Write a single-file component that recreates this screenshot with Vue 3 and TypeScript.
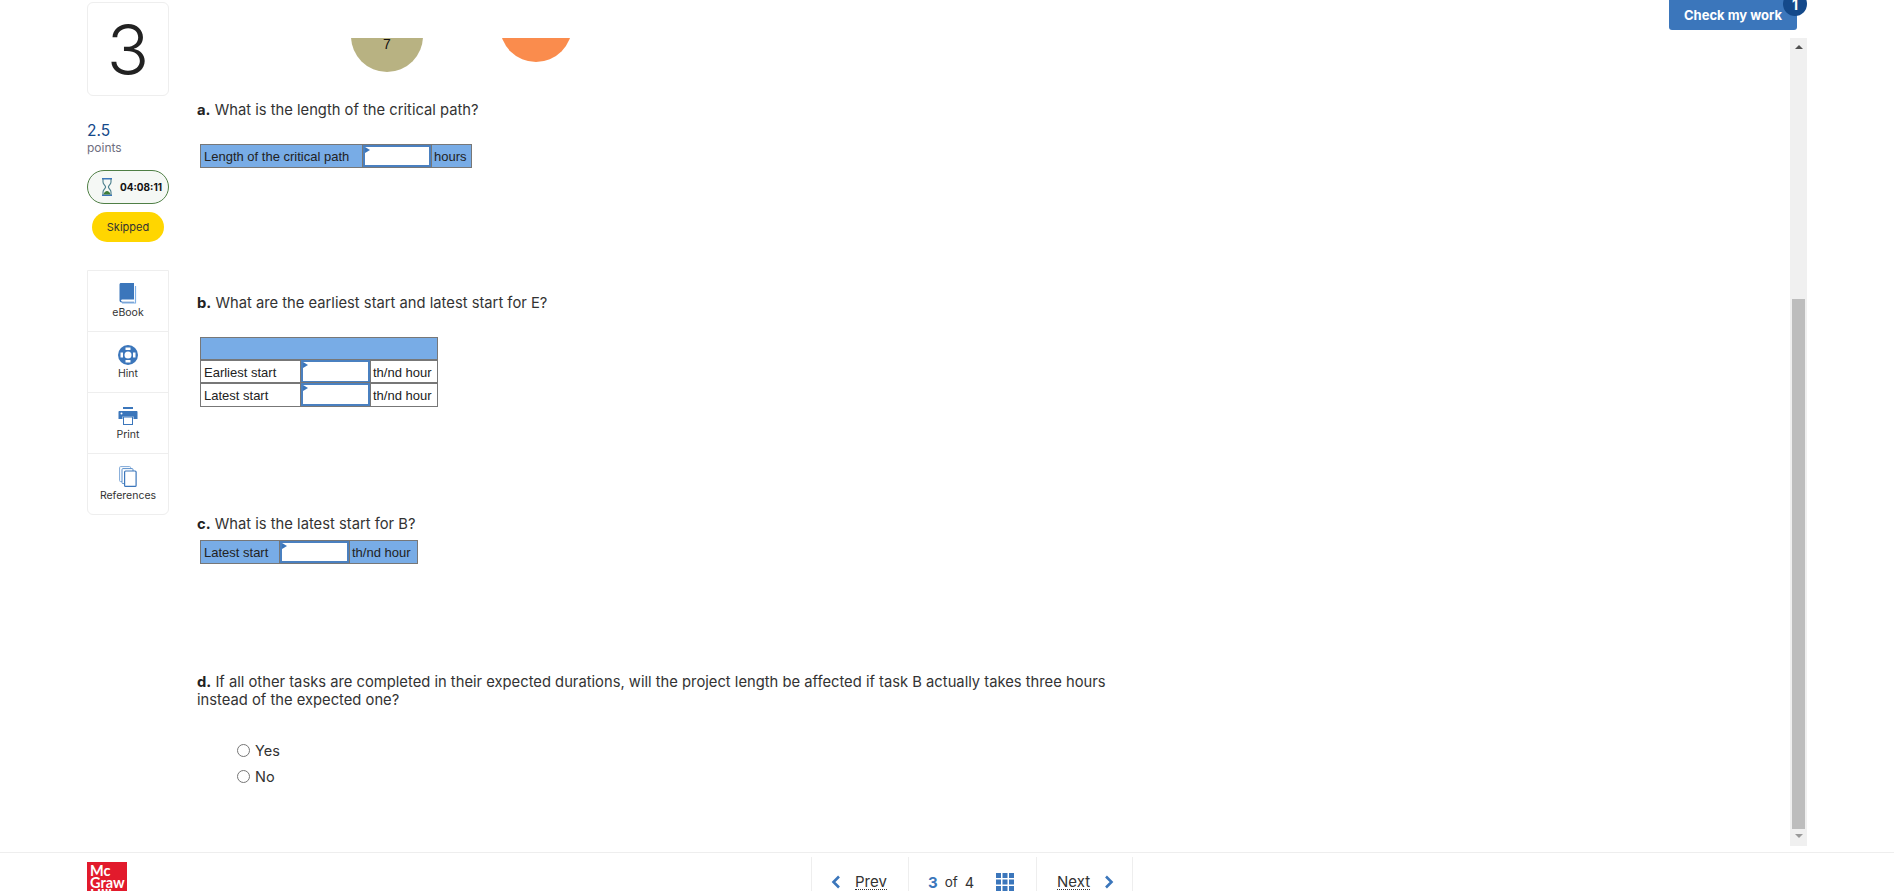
<script setup lang="ts">
const tools = ['eBook', 'Hint', 'Print', 'References'];
const startRows = ['Earliest start', 'Latest start'];
const choices = ['Yes', 'No'];
</script>

<template>
  <div class="page">
    <div class="workspace">
      <aside class="rail">
        <div class="number-card">3</div>
        <div class="points">
          <span class="points-value">2.5</span>
          <span class="points-label">points</span>
        </div>
        <div class="timer">
          <svg class="hourglass" viewBox="0 0 12 18" width="12" height="18">
            <path d="M1 .8h10M1 17.2h10" stroke="#3b76bb" stroke-width="1.4" fill="none" />
            <path d="M2 1v3c0 2.4 2.6 3.6 2.6 5S2 11.6 2 14v3M10 1v3c0 2.4-2.6 3.6-2.6 5s2.6 2.6 2.6 5v3" stroke="#4a7f8c" stroke-width="1.1" fill="none" />
            <path d="M2.6 16.6c.3-2.4 2-3.6 3.4-3.6s3.1 1.2 3.4 3.6z" fill="#3f7d3a" />
          </svg>
          <span>04:08:11</span>
        </div>
        <div class="status">Skipped</div>
        <nav class="tools">
          <div v-for="tool in tools" :key="tool" class="tool">
            <svg v-if="tool === 'eBook'" viewBox="0 0 18 21" width="18" height="21">
              <path d="M16.5 3v17H3" stroke="#7fb0e6" stroke-width="1.2" fill="none" />
              <path d="M2 0h13v16.5H3.500c-.8 0-1.500.4-1.500 1.100s.7 1.100 1.500 1.100H15v.8H2.800C1.500 19.500.5 18.800.5 17.500V1.500C.5.600 1.100 0 2 0z" fill="#3b76bb" />
            </svg>
            <svg v-else-if="tool === 'Hint'" viewBox="0 0 20 20" width="20" height="20">
              <circle cx="10" cy="10" r="10" fill="#3b76bb" />
              <circle cx="10" cy="10" r="3.500" fill="#fff" />
              <path d="M7.500 2.500h5v2.500h-5zM7.500 15h5v2.500h-5zM2.500 7.500H5v5H2.500zM15 7.500h2.500v5H15z" fill="#fff" />
            </svg>
            <svg v-else-if="tool === 'Print'" viewBox="0 0 20 20" width="20" height="20">
              <path d="M5 1h10v2H5z" fill="#3b76bb" />
              <path d="M1.500 5h17c.6 0 1 .4 1 1v7h-4v-2.500h-11V13h-4V6c0-.6.4-1 1-1z" fill="#3b76bb" />
              <circle cx="3.500" cy="7.500" r="1" fill="#fff" />
              <rect x="5.500" y="11" width="9" height="7.500" fill="#fff" stroke="#3b76bb" />
            </svg>
            <svg v-else viewBox="0 0 18 21" width="18" height="21">
              <rect x=".6" y=".6" width="11" height="15" rx="1" fill="#fff" stroke="#7fa8d8" />
              <rect x="3" y="2.600" width="11" height="15" rx="1" fill="#fff" stroke="#5a8fcb" />
              <rect x="5.600" y="5" width="11.500" height="15.400" rx="1" fill="#fff" stroke="#3b76bb" stroke-width="1.2" />
            </svg>
            <span>{{ tool }}</span>
          </div>
        </nav>
      </aside>

      <main class="question">
        <div class="action-bar">
          <button class="check-btn" type="button">
            Check my work
            <span class="badge">1</span>
          </button>
        </div>
        <div class="scroll-area">
          <div class="content">
            <div class="diagram">
              <div class="node node-olive">7</div>
              <div class="node node-orange">8</div>
            </div>

            <p class="prompt"><b>a.</b> What is the length of the critical path?</p>
            <div class="sheet sheet-a blue">
              <div class="cell">Length of the critical path</div>
              <div class="answer"></div>
              <div class="cell">hours</div>
            </div>

            <p class="prompt prompt-b"><b>b.</b> What are the earliest start and latest start for E?</p>
            <div class="sheet sheet-b">
              <div class="sheet-head"></div>
              <template v-for="row in startRows" :key="row">
                <div class="cell">{{ row }}</div>
                <div class="answer"></div>
                <div class="cell">th/nd hour</div>
              </template>
            </div>

            <p class="prompt prompt-c"><b>c.</b> What is the latest start for B?</p>
            <div class="sheet sheet-c blue">
              <div class="cell">Latest start</div>
              <div class="answer"></div>
              <div class="cell">th/nd hour</div>
            </div>

            <p class="prompt prompt-d">
              <b>d.</b> If all other tasks are completed in their expected durations, will the project length be affected if task B actually takes three hours instead of the expected one?
            </p>
            <div class="choices">
              <label v-for="choice in choices" :key="choice" class="choice">
                <span class="radio"></span>{{ choice }}
              </label>
            </div>
          </div>
          <div class="scrollbar">
            <span class="arrow arrow-up"></span>
            <span class="track-gap"></span>
            <span class="thumb"></span>
            <span class="arrow arrow-down"></span>
          </div>
        </div>
      </main>
    </div>

    <footer class="footer">
      <div class="logo">Mc<br />Graw<br />Hill</div>
      <div class="pager">
        <a class="pager-part prev">
          <svg viewBox="0 0 10 14" width="10" height="14"><path d="M8 1.500L2.500 7 8 12.500" fill="none" stroke="#3b76bb" stroke-width="2.600" /></svg>
          <span class="pager-link">Prev</span>
        </a>
        <div class="pager-part pages">
          <b>3</b><span class="of">of</span><span class="total">4</span>
          <svg class="grid-icon" viewBox="0 0 18 18" width="18" height="18">
            <path d="M0 0h5v5H0zM6.500 0h5v5h-5zM13 0h5v5h-5zM0 6.500h5v5H0zM6.500 6.500h5v5h-5zM13 6.500h5v5h-5zM0 13h5v5H0zM6.500 13h5v5h-5zM13 13h5v5h-5z" fill="#3b76bb" />
          </svg>
        </div>
        <a class="pager-part next">
          <span class="pager-link">Next</span>
          <svg viewBox="0 0 10 14" width="10" height="14"><path d="M2 1.500L7.500 7 2 12.500" fill="none" stroke="#3b76bb" stroke-width="2.600" /></svg>
        </a>
      </div>
    </footer>
  </div>
</template>

<style>
html, body { background: #fff; margin: 0; overflow: hidden; }
</style>

<style scoped>
.action-bar { display: flex; flex: none; height: 38px; justify-content: flex-end; padding-right: 97px; }
.answer { background: #fff; border: 2px solid #4a80c0; box-sizing: border-box; position: relative; }
.answer::before { border-bottom: 3px solid transparent; border-left: 5px solid #3b76bb; border-top: 3px solid transparent; content: ''; left: 0; position: absolute; top: 0; }
.arrow { border-left: 4px solid transparent; border-right: 4px solid transparent; display: block; flex: none; height: 0; margin: 0 auto; width: 0; }
.arrow-down { border-top: 4px solid #9a9a9a; margin-bottom: 6px; margin-top: 5px; }
.arrow-up { border-bottom: 4px solid #505050; margin-top: 7px; }
.badge { align-items: center; background: #14498a; border-radius: 50%; color: #fff; display: flex; font-size: 14px; height: 24px; justify-content: center; position: absolute; right: -10px; top: -8px; width: 24px; }
.blue { background: #78ace6; }
.cell { align-items: center; display: flex; padding-left: 3px; white-space: nowrap; }
.check-btn { background: #3b76bb; border: none; border-radius: 0 0 3px 3px; color: #fff; font-family: Inter, sans-serif; font-size: 13px; font-weight: 700; height: 30px; padding: 0; position: relative; width: 128px; }
.choice { align-items: center; display: flex; font-size: 14.500px; height: 26.500px; }
.choices { display: flex; flex-direction: column; margin-top: 28px; padding-left: 40px; }
.content { flex: 1; min-width: 0; }
.diagram { height: 63px; position: relative; }
.footer { border-top: 1px solid #eee; display: flex; flex: 1; min-height: 0; overflow: hidden; padding: 9px 0 0 87px; position: relative; }
.grid-icon { margin-left: 22px; }
.logo { background: #e21a2c; color: #fff; font-family: Lato, sans-serif; font-size: 14.500px; font-weight: 700; height: 45px; line-height: 12px; padding: 3px 0 0 3px; width: 37px; }
.node { border-radius: 50%; color: #111; font-family: 'Liberation Sans', sans-serif; font-size: 14px; height: 72px; position: absolute; text-align: center; width: 72px; }
.node-olive { background: #b8b282; left: 154px; line-height: 88px; top: -38px; }
.node-orange { background: #fa8c4d; left: 303px; line-height: 82px; top: -48px; }
.number-card { align-items: center; border: 1px solid #eee; border-radius: 6px; box-sizing: border-box; color: #222; display: flex; font-size: 70px; font-weight: 300; height: 94px; justify-content: center; }
.of { font-size: 13.500px; margin-left: 7px; }
.page { color: #333; display: flex; flex-direction: column; font-family: Inter, sans-serif; height: 891px; overflow: hidden; }
.pager { display: flex; height: 50px; left: 811px; position: absolute; top: 4px; }
.pager-link { border-bottom: 1px dotted #333; line-height: 15px; }
.pager-part { align-items: center; border-left: 1px solid #eee; box-sizing: border-box; display: flex; font-size: 15px; height: 50px; }
.pages { padding-left: 19px; width: 128px; }
.pages b { color: #3b76bb; font-size: 15px; }
.next { border-right: 1px solid #eee; gap: 14px; padding-left: 20px; width: 97px; }
.points { display: flex; flex-direction: column; margin-top: 26px; }
.points-label { color: #6e6e80; font-size: 12px; line-height: 15px; }
.points-value { color: #14498a; font-size: 15.500px; line-height: 18px; }
.prev { gap: 14px; padding-left: 19px; width: 97px; }
.prompt { font-size: 14.750px; line-height: 18px; margin: 0; max-width: 925px; }
.prompt b { color: #222; }
.prompt-b { margin-top: 127px; }
.prompt-c { margin-top: 109px; }
.prompt-d { margin-top: 110px; }
.question { display: flex; flex: 1; flex-direction: column; margin-left: 28px; min-width: 0; }
.radio { border: 1px solid #767676; border-radius: 50%; box-sizing: border-box; height: 13px; margin-right: 5px; width: 13px; }
.rail { flex: none; margin-left: 87px; padding-top: 2px; width: 82px; }
.scroll-area { display: flex; flex: 1; margin-bottom: 6px; min-height: 0; overflow: hidden; padding-right: 87px; }
.scrollbar { background: #f0f0f0; display: flex; flex: none; flex-direction: column; width: 17px; }
.sheet { color: #222; display: grid; font-family: 'Liberation Sans', sans-serif; font-size: 13px; margin-left: 4px; }
.sheet > div { box-shadow: 0 0 0 1px #777; }
.sheet-a { grid-template-columns: 162px 68px 40px; height: 22px; margin-top: 26px; width: 270px; }
.sheet-b { grid-template-columns: 100px 69px 67px; grid-template-rows: 22px 23px 23px; margin-top: 26px; width: 236px; }
.sheet-b .cell { padding-top: 1px; }
.sheet-c { grid-template-columns: 79px 69px 68px; height: 22px; margin-top: 8px; width: 216px; }
.sheet-head { background: #78ace6; grid-column: 1 / -1; }
.status { align-items: center; background: #ffd600; border-radius: 15px; color: #333; display: flex; font-size: 11px; height: 30px; justify-content: center; margin: 8px 5px 0; }
.thumb { background: #bdbdbd; display: block; flex: none; height: 530px; margin: 0 2px; }
.timer { align-items: center; background: #f5f8f5; border: 1px solid #4f7f45; border-radius: 17px; box-sizing: border-box; color: #111; display: flex; font-size: 10px; font-weight: 700; gap: 7px; height: 34px; margin-top: 15px; padding-left: 13px; }
.tool { align-items: center; border-top: 1px solid #eee; display: flex; flex-direction: column; font-size: 10.500px; gap: 2px; height: 60px; justify-content: center; }
.tool:first-child { border-top: none; }
.tools { border: 1px solid #eee; border-radius: 0 0 6px 6px; box-sizing: border-box; display: flex; flex-direction: column; height: 245px; margin-top: 28px; }
.total { font-size: 14.500px; margin-left: 7px; }
.track-gap { display: block; flex: none; height: 250px; }
.workspace { display: flex; flex: none; height: 852px; }
</style>
